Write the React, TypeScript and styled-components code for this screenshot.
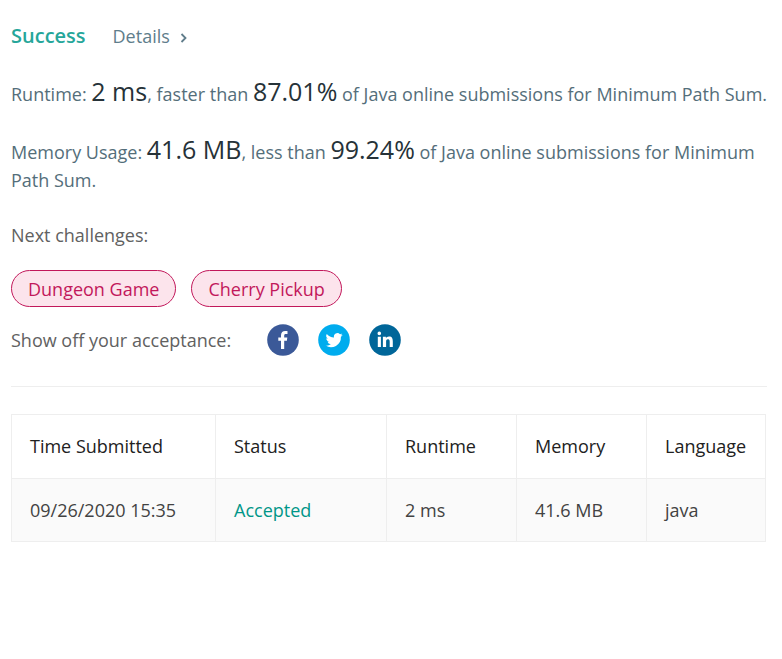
import React from "react";
import styled, { createGlobalStyle } from "styled-components";

const GlobalStyle = createGlobalStyle`
  * { box-sizing: border-box; }
  body {
    margin: 0;
    background: #fff;
    color: #616161;
    font-family: "Open Sans", "Noto Sans", sans-serif;
    font-size: 18px;
    font-weight: 400;
    line-height: 28px;
  }
`;

const Page = styled.main`
  padding: 20px 8px 20px 11px;
`;

const Header = styled.header`
  display: flex;
  align-items: center;
  gap: 27px;
  height: 32px;
`;

const Status = styled.h1`
  margin: 0;
  color: #26a69a;
  font-size: 20px;
  font-weight: 600;
  line-height: 32px;
`;

const DetailsLink = styled.a`
  display: flex;
  align-items: center;
  gap: 10px;
  color: #607d8b;
  text-decoration: none;
`;

const Chevron = styled.svg`
  display: block;
  margin-top: 3px;
`;

const Results = styled.section`
  display: grid;
  gap: 27px;
  padding-top: 25px;
  color: #546e7a;
`;

const Result = styled.p`
  margin: 0;
`;

const Figure = styled.span`
  color: #263238;
  font-size: 25px;
  line-height: 28px;
`;

const Challenges = styled.section`
  margin-top: 27px;
`;

const Label = styled.h2`
  margin: 0;
  font-size: 18px;
  font-weight: 400;
`;

const Tags = styled.nav`
  display: flex;
  gap: 15px;
  margin-top: 21px;
`;

const Tag = styled.a`
  height: 37px;
  padding: 0 16px;
  border: 1px solid #c2185b;
  border-radius: 19px;
  background: #fce4ec;
  color: #c2185b;
  line-height: 36px;
  text-decoration: none;
`;

const Share = styled.div`
  display: flex;
  align-items: center;
  gap: 19px;
  margin-top: 17px;
`;

const ShareLabel = styled.span`
  margin-right: 17px;
`;

const ShareLink = styled.a`
  display: block;
  height: 32px;
`;

const Divider = styled.hr`
  margin: 30px 7px 27px 0;
  border: 0;
  border-top: 1px solid #eee;
`;

const TableFrame = styled.div`
  padding-right: 9px;
`;

const Table = styled.table`
  width: 100%;
  border-collapse: collapse;
  table-layout: fixed;
`;

const Column = styled.col<{ $width: number }>`
  width: ${({ $width }) => $width}px;
`;

const HeadCell = styled.th`
  height: 64px;
  padding: 0 18px 1px;
  border: 1px solid #eee;
  color: #212121;
  font-weight: 400;
  text-align: left;
`;

const Cell = styled.td`
  height: 63px;
  padding: 0 18px 1px;
  border: 1px solid #eee;
  background: #fafafa;
  color: #424242;
`;

const AcceptedLink = styled.a`
  color: #009688;
  text-decoration: none;
`;

const networks = [
  {
    name: "Facebook",
    color: "#3b5998",
    path: "M17.2 25v-8.200h2.700l.4-3.200h-3.100v-2c0-.9.3-1.500 1.600-1.500h1.700V7.200c-.3 0-1.300-.1-2.400-.1-2.400 0-4.100 1.500-4.100 4.200v2.300h-2.700v3.200H14V25z",
  },
  {
    name: "Twitter",
    color: "#00acee",
    path: "M24.7 10.800c-.6.3-1.300.5-2 .6.7-.4 1.300-1.100 1.500-1.900-.7.4-1.400.7-2.200.8a3.500 3.500 0 0 0-6 3.200 9.900 9.900 0 0 1-7.200-3.600 3.500 3.500 0 0 0 1.100 4.700c-.6 0-1.100-.2-1.600-.4 0 1.700 1.200 3.100 2.800 3.500-.5.1-1 .1-1.600 0a3.500 3.500 0 0 0 3.300 2.500A7 7 0 0 1 7.600 21.600a9.900 9.900 0 0 0 15.300-8.800c.7-.5 1.300-1.100 1.800-2z",
  },
  {
    name: "LinkedIn",
    color: "#006699",
    path: "M8.800 12.700h3.100V23H8.800zM10.300 7.600a1.800 1.800 0 1 1 0 3.600 1.800 1.800 0 0 1 0-3.600zM13.900 12.700h3v1.400c.5-.9 1.600-1.700 3.100-1.700 3.200 0 3.800 2.100 3.800 5V23h-3.100v-5c0-1.200 0-2.700-1.700-2.700s-1.900 1.300-1.900 2.600V23h-3.200z",
  },
];

const columns = [
  { title: "Time Submitted", width: 204 },
  { title: "Status", width: 171 },
  { title: "Runtime", width: 130 },
  { title: "Memory", width: 130 },
  { title: "Language", width: 119 },
];

export default function App() {
  return (
    <Page>
      <GlobalStyle />
      <Header>
        <Status>Success</Status>
        <DetailsLink href="#details">
          Details
          <Chevron width="8" height="10" viewBox="0 0 8 10" fill="none" stroke="currentColor" strokeWidth="1.8" aria-hidden="true">
            <path d="M1.500 1l4 4-4 4" />
          </Chevron>
        </DetailsLink>
      </Header>
      <Results>
        <Result>
          Runtime: <Figure>2 ms</Figure>, faster than <Figure>87.01%</Figure> of Java online submissions for Minimum Path Sum.
        </Result>
        <Result>
          Memory Usage: <Figure>41.6 MB</Figure>, less than <Figure>99.24%</Figure> of Java online submissions for Minimum Path Sum.
        </Result>
      </Results>
      <Challenges>
        <Label>Next challenges:</Label>
        <Tags aria-label="Next challenges">
          <Tag href="#dungeon-game">Dungeon Game</Tag>
          <Tag href="#cherry-pickup">Cherry Pickup</Tag>
        </Tags>
      </Challenges>
      <Share>
        <ShareLabel>Show off your acceptance:</ShareLabel>
        {networks.map(({ name, color, path }) => (
          <ShareLink key={name} href={`#${name.toLowerCase()}`} aria-label={name}>
            <svg width="32" height="32" viewBox="0 0 32 32" aria-hidden="true">
              <circle cx="16" cy="16" r="15.8" fill={color} />
              <path d={path} fill="#fff" />
            </svg>
          </ShareLink>
        ))}
      </Share>
      <Divider />
      <TableFrame>
        <Table>
          <colgroup>
            {columns.map(({ title, width }) => <Column key={title} $width={width} />)}
          </colgroup>
          <thead>
            <tr>{columns.map(({ title }) => <HeadCell key={title} scope="col">{title}</HeadCell>)}</tr>
          </thead>
          <tbody>
            <tr>
              <Cell>09/26/2020 15:35</Cell>
              <Cell><AcceptedLink href="#submission">Accepted</AcceptedLink></Cell>
              <Cell>2 ms</Cell>
              <Cell>41.6 MB</Cell>
              <Cell>java</Cell>
            </tr>
          </tbody>
        </Table>
      </TableFrame>
    </Page>
  );
}
